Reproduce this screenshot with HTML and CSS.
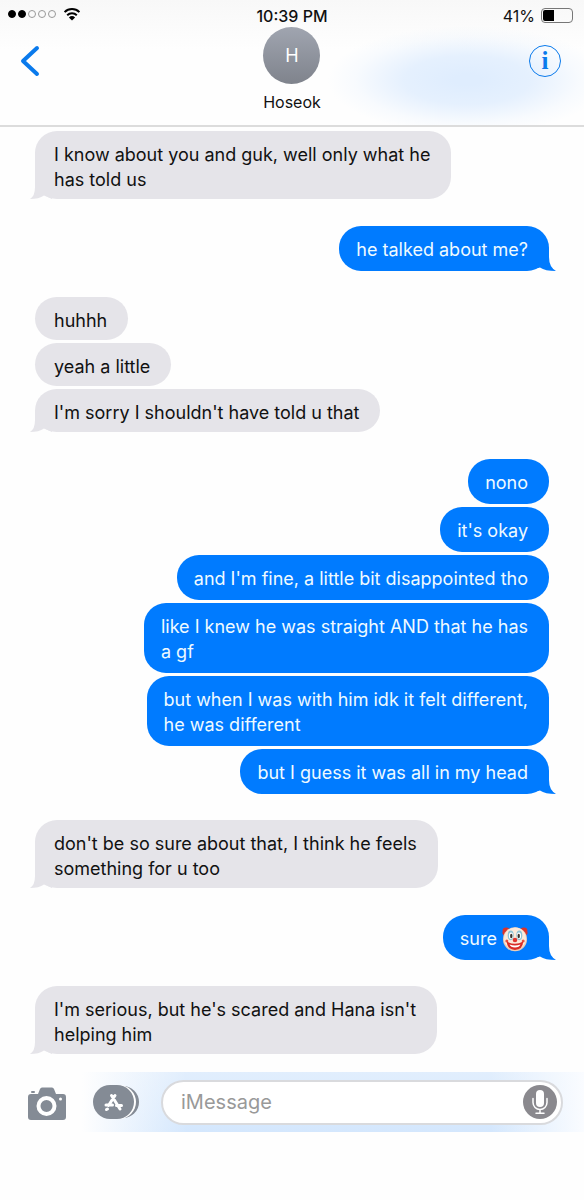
FILE: index.html
```html
<!DOCTYPE html>
<html lang="en">

<head>
    <meta charset="UTF-8" />
    <meta name="viewport" content="width=device-width, initial-scale=1" />
    <title>Hoseok</title>
    <link rel="stylesheet" href="styles.css">
</head>

<body>
    <header class="header">
        <div class="status-bar">
            <div class="status-left">
                <span class="dot full"></span>
                <span class="dot full"></span>
                <span class="dot"></span>
                <span class="dot"></span>
                <span class="dot"></span>
                <svg class="wifi" viewBox="0 0 18 14" aria-hidden="true">
                    <path d="M1.6 5.1a10.6 10.6 0 0 1 14.8 0" />
                    <path d="M4.2 8.2a6.9 6.9 0 0 1 9.6 0" />
                    <path class="wifi-base" d="M5.9 10.4a4.5 4.5 0 0 1 6.2 0L9 13.6z" />
                </svg>
            </div>
            <div class="time">10:39 PM</div>
            <div class="status-right">
                <span>41%</span>
                <span class="battery"><span class="battery-level"></span></span>
            </div>
        </div>
        <div class="contact-bar">
            <button type="button" class="back" aria-label="Back">
                <svg viewBox="0 0 20 32" aria-hidden="true">
                    <path d="M17 3L3 16L17 29" />
                </svg>
            </button>
            <div class="contact">
                <div class="avatar">H</div>
                <div class="name">Hoseok</div>
            </div>
            <button type="button" class="info" aria-label="Details">i</button>
        </div>
    </header>

    <main class="chat">
        <div class="group received">
            <p class="bubble tail">I know about you and guk, well only what he<br>has told us</p>
        </div>
        <div class="group sent">
            <p class="bubble tail">he talked about me?</p>
        </div>
        <div class="group received">
            <p class="bubble">huhhh</p>
            <p class="bubble">yeah a little</p>
            <p class="bubble tail">I'm sorry I shouldn't have told u that</p>
        </div>
        <div class="group sent">
            <p class="bubble">nono</p>
            <p class="bubble">it's okay</p>
            <p class="bubble">and I'm fine, a little bit disappointed tho</p>
            <p class="bubble">like I knew he was straight AND that he has<br>a gf</p>
            <p class="bubble">but when I was with him idk it felt different,<br>he was different</p>
            <p class="bubble tail">but I guess it was all in my head</p>
        </div>
        <div class="group received">
            <p class="bubble tail">don't be so sure about that, I think he feels<br>something for u too</p>
        </div>
        <div class="group sent">
            <p class="bubble tail">sure
                <svg class="emoji" viewBox="0 0 26 26" role="img" aria-label="clown face">
                    <path fill="#d9332b" d="M4 1.500C1.500 1.500.2 3.300.7 5.300C-.2 7.200 1 9.400 3 9.300L8 4.500C7.500 2.500 6 1.300 4 1.500z" />
                    <path fill="#d9332b" d="M22 1.500c2.500 0 3.800 1.800 3.300 3.800c.9 1.900-.3 4.100-2.300 4L18 4.500c.5-2 2-3.200 4-3z" />
                    <circle cx="13" cy="13.200" r="12" fill="#ecccb4" />
                    <circle cx="13" cy="12.500" r="11" fill="#fbeadb" />
                    <ellipse cx="8.700" cy="9.300" rx="3" ry="4.900" fill="#8cc3d6" />
                    <ellipse cx="17.300" cy="9.300" rx="3" ry="4.900" fill="#8cc3d6" />
                    <ellipse cx="9" cy="9.800" rx="2.100" ry="3.300" fill="#fff" />
                    <ellipse cx="17" cy="9.800" rx="2.100" ry="3.300" fill="#fff" />
                    <ellipse cx="9.300" cy="10" rx="1.200" ry="2.200" fill="#3a3530" />
                    <ellipse cx="16.700" cy="10" rx="1.200" ry="2.200" fill="#3a3530" />
                    <circle cx="13" cy="14" r="2.300" fill="#e0352d" />
                    <circle cx="4.800" cy="15" r="1.500" fill="#e8523f" />
                    <circle cx="21.200" cy="15" r="1.500" fill="#e8523f" />
                    <path fill="#d92c25" d="M4.800 15.600Q13 20 21.200 15.600Q20.800 23.800 13 23.900Q5.200 23.800 4.800 15.600z" />
                    <path fill="#fff" d="M7.500 18.600Q13 20.600 18.500 18.600Q17.300 21.500 13 21.500Q8.700 21.500 7.500 18.600z" />
                </svg>
            </p>
        </div>
        <div class="group received">
            <p class="bubble tail">I'm serious, but he's scared and Hana isn't<br>helping him</p>
        </div>
    </main>

    <footer class="toolbar">
        <button type="button" class="camera" aria-label="Camera">
            <svg viewBox="0 -3 38 36" aria-hidden="true">
                <path fill="#848b95" d="M3 7h7l2-5q.6-1.500 2-1.500h10q1.400 0 2 1.500l2 5h7q3 0 3 3v20q0 3-3 3H3q-3 0-3-3V10q0-3 3-3z" />
                <rect x="3" y="4" width="4" height="2" rx="1" fill="#848b95" />
                <circle cx="18.500" cy="19" r="8" fill="#848b95" stroke="#fff" stroke-width="4" />
                <circle cx="32.500" cy="12" r="1.500" fill="#fff" />
            </svg>
        </button>
        <button type="button" class="apps" aria-label="Apps">
            <svg viewBox="0 0 46 34" aria-hidden="true">
                <rect x="12" y="1" width="34" height="32" rx="16" fill="#848b95" />
                <rect x="8" y="0" width="35" height="34" rx="17" fill="#fff" />
                <rect x="0" y="0" width="41" height="34" rx="17" fill="#848b95" />
                <g stroke="#fff" stroke-width="3" stroke-linecap="round" stroke-linejoin="round" fill="none">
                    <path d="M18.500 10.500L27 24M22 10.500L15.500 20.500M13 20H19.500M23.500 20.500H28.500" />
                    <path d="M13.500 24.500L14.500 24" />
                </g>
            </svg>
        </button>
        <div class="message-box">
            <input type="text" class="message-input" placeholder="iMessage" aria-label="iMessage" />
            <button type="button" class="mic" aria-label="Record audio">
                <svg viewBox="0 0 34 34" aria-hidden="true">
                    <rect x="13" y="5" width="8" height="17" rx="4" fill="#fff" />
                    <path fill="none" stroke="#fff" stroke-width="1.500" stroke-linecap="round" d="M10 13.500V17.500a7 7 0 0 0 14 0V13.500M17 24.500V28M13 28.300H21" />
                </svg>
            </button>
        </div>
    </footer>
</body>

</html>
```
FILE: styles.css
```css
* {
    box-sizing: border-box;
}

body {
    margin: 0;
    background-color: #fefefe;
    color: #111;
    font-family: Inter, "Liberation Sans", sans-serif;
}

button {
    border: none;
    padding: 0;
    background: none;
    cursor: pointer;
}

svg {
    display: block;
}

/* header */
.header {
    padding-bottom: 13px;
    border-bottom: 2px solid #dcdcdc;
    background: radial-gradient(ellipse 140px 54px at 80% 64%, #dfedfe 10%, rgba(223, 237, 254, 0.8) 45%, rgba(223, 237, 254, 0.2) 80%, rgba(223, 237, 254, 0) 100%), linear-gradient(#f8f8f8, #fefefe 50px);
}

.status-bar {
    display: grid;
    grid-template-columns: 1fr auto 1fr;
    align-items: center;
    height: 27px;
    padding: 4px 8px 0;
    font-size: 16px;
}

.status-left {
    display: flex;
    align-items: center;
    gap: 2px;
    padding-bottom: 4px;
}

.dot {
    width: 8px;
    height: 8px;
    border: 1px solid #999;
    border-radius: 50%;
}

.dot.full {
    border-color: #000;
    background-color: #000;
}

.wifi {
    width: 18px;
    height: 14px;
    margin-left: 5px;
    fill: none;
    stroke: #000;
    stroke-width: 2;
}

.wifi-base {
    fill: #000;
    stroke: none;
}

.time {
    font-weight: 500;
}

.status-right {
    display: flex;
    justify-content: flex-end;
    align-items: center;
    gap: 6px;
    padding-right: 3px;
}

.battery {
    width: 32px;
    height: 15px;
    padding: 1px;
    border: 1px solid #777;
    border-radius: 4px;
}

.battery-level {
    display: block;
    width: 41%;
    height: 100%;
    border-radius: 2px 0 0 2px;
    background-color: #000;
}

.contact-bar {
    display: grid;
    grid-template-columns: 1fr auto 1fr;
    padding: 0 20px;
}

.back,
.info {
    margin-top: 18px;
}

.back svg {
    width: 20px;
    height: 32px;
    fill: none;
    stroke: #0a7aec;
    stroke-width: 4;
    stroke-linecap: round;
    stroke-linejoin: round;
}

.back {
    justify-self: start;
    align-self: start;
}

.info {
    justify-self: end;
    width: 32px;
    height: 32px;
    margin-right: 3px;
    border: 1px solid #0a7aec;
    border-radius: 50%;
    color: #0a7aec;
    font: bold 25px/28px "Liberation Serif", serif;
}

.contact {
    display: flex;
    flex-direction: column;
    align-items: center;
    gap: 8px;
}

.avatar {
    width: 57px;
    height: 57px;
    border-radius: 50%;
    background: linear-gradient(#a0a5b0, #7f838c);
    color: #fff;
    font-size: 18px;
    line-height: 57px;
    text-align: center;
}

.name {
    font-size: 16px;
    line-height: 20px;
}

/* messages */
.chat {
    display: flex;
    flex-direction: column;
    padding: 4px 35px 18px;
    font-size: 18px;
    line-height: 25px;
}

.group {
    display: flex;
    flex-direction: column;
    gap: 3px;
}

.received {
    align-items: flex-start;
}

.sent {
    align-items: flex-end;
}

.sent + .received {
    margin-top: 26px;
}

.received + .sent {
    margin-top: 27px;
}

.bubble {
    position: relative;
    margin: 0;
    border-radius: 22px;
}

.received .bubble {
    padding: 11px 21px 7px 19px;
    background-color: #e5e4e9;
}

.sent .bubble {
    padding: 11px 21px 9px 17px;
    background-color: #007bff;
    color: #effaff;
}

.tail::after {
    content: "";
    position: absolute;
    bottom: 0;
    width: 22px;
    height: 22px;
}

.received .tail::after {
    left: -5px;
    background-color: #e5e4e9;
    clip-path: path("M5 0V10Q5 19 0 22Q9 22 14 18.500L22 22V0Z");
}

.sent .tail::after {
    right: -7px;
    background-color: #007bff;
    clip-path: path("M15 0V8Q15 18 22 22Q11 22 6 18.500L0 20V0Z");
}

.emoji {
    display: inline-block;
    width: 26px;
    height: 26px;
    margin: -4px 0;
    vertical-align: -3px;
}

/* toolbar */
.toolbar {
    display: flex;
    align-items: center;
    height: 60px;
    padding: 0 21px 0 28px;
    background: linear-gradient(90deg, #fefefe 14%, rgba(254, 254, 254, 0) 32%, rgba(254, 254, 254, 0) 84%, #fafcff), linear-gradient(#e1eefd, #d4e7fd);
}

.camera svg {
    width: 38px;
    height: 36px;
}

.apps {
    margin-left: 27px;
}

.apps svg {
    width: 46px;
    height: 34px;
}

.message-box {
    display: flex;
    flex: 1;
    align-items: center;
    height: 45px;
    margin-left: 22px;
    padding: 0 4px 0 18px;
    border: 2px solid #d9dadd;
    border-radius: 23px;
    background-color: #fff;
}

.message-input {
    flex: 1;
    min-width: 0;
    padding: 0;
    border: none;
    outline: none;
    background: none;
    font: 20px Inter, "Liberation Sans", sans-serif;
}

.message-input::placeholder {
    color: #999;
}

.mic {
    width: 34px;
    height: 34px;
    border-radius: 50%;
    background-color: #8a898e;
}
```
